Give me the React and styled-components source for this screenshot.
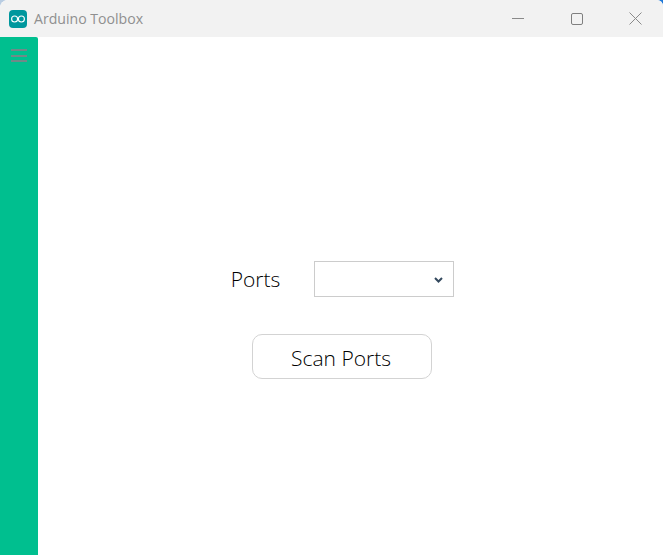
import React from 'react';
import styled, { createGlobalStyle } from 'styled-components';

const Global = createGlobalStyle`
    html, body {
        margin: 0;
        padding: 0;
        background: linear-gradient(90deg, #b9cde2, #1f78d8) no-repeat;
        background-size: 100% 12px;
    }
    * {
        box-sizing: border-box;
    }
`

const Win = styled.div`
    width: 663px;
    height: 555px;
    display: flex;
    flex-direction: column;
    overflow: hidden;
    background: #fff;
    border-radius: 8px 6px 0 0;
    font-family: "Open Sans", sans-serif;
`

const TitleBar = styled.div`
    height: 37px;
    flex: none;
    display: flex;
    align-items: center;
    background: #f2f2f2;
    padding-left: 9px;
`

const AppTitle = styled.span`
    margin-left: 7px;
    font-size: 14.1px;
    color: #8f8f8f;
`

const WinButtons = styled.div`
    margin-left: auto;
    margin-right: -2px;
    display: flex;
    height: 100%;
`

const WinButton = styled.div`
    width: 59px;
    display: flex;
    align-items: center;
    justify-content: center;
`

const Body = styled.div`
    flex: 1;
    display: flex;
`

const Side = styled.div`
    width: 38px;
    flex: none;
    background: #00bf8f;
    border-top-right-radius: 2px;
    padding: 12px 0 0 11px;
`

const Burger = styled.div`
    width: 16px;
    height: 13px;
    display: flex;
    flex-direction: column;
    justify-content: space-between;

    span {
        height: 2px;
        background: #6f8a88;
    }
`

const Main = styled.div`
    flex: 1;
    display: flex;
    flex-direction: column;
    align-items: center;
    padding-top: 224px;
    padding-right: 17px;
`

const Row = styled.div`
    display: flex;
    align-items: center;
    gap: 34px;
    padding-left: 1px;
`

const Label = styled.label`
    font-size: 21px;
    font-weight: 300;
    color: #000;
`

const SelectBox = styled.div`
    position: relative;
    width: 140px;
    height: 36px;
    border: 1px solid #ccc;
    background: #fff;

    svg {
        position: absolute;
        right: 10px;
        top: 15px;
    }
`

const ScanButton = styled.button`
    width: 180px;
    height: 45px;
    margin-top: 37px;
    padding: 3px 2px 0 0;
    background: #fff;
    border: 1px solid #d3d3d3;
    border-radius: 10px;
    font-family: inherit;
    font-size: 21px;
    font-weight: 300;
    color: #000;
`

const Logo = () => (
    <svg width="18" height="18" viewBox="0 0 18 18">
        <rect width="18" height="18" rx="4" fill="#00979d" />
        <circle cx="5.6" cy="9" r="3" fill="none" stroke="#fff" strokeWidth="1.1" />
        <circle cx="12.4" cy="9" r="3" fill="none" stroke="#fff" strokeWidth="1.1" />
    </svg>
)

const App = () => (
    <Win>
        <Global />
        <TitleBar>
            <Logo />
            <AppTitle>Arduino Toolbox</AppTitle>
            <WinButtons>
                <WinButton>
                    <svg width="12" height="12" viewBox="0 0 12 12"><path d="M0 5.5H12" stroke="#8a8a8a" /></svg>
                </WinButton>
                <WinButton>
                    <svg width="12" height="12" viewBox="0 0 12 12"><rect x=".5" y=".5" width="11" height="11" rx="1.5" fill="none" stroke="#7f7f7f" /></svg>
                </WinButton>
                <WinButton>
                    <svg width="13" height="13" viewBox="0 0 13 13"><path d="M.5 .5L12.5 12.5M12.5 .5L.5 12.5" stroke="#8a8a8a" /></svg>
                </WinButton>
            </WinButtons>
        </TitleBar>
        <Body>
            <Side>
                <Burger><span /><span /><span /></Burger>
            </Side>
            <Main>
                <Row>
                    <Label>Ports</Label>
                    <SelectBox>
                        <svg width="9" height="6" viewBox="0 0 9 6"><path d="M1 1L4.5 4.5L8 1" fill="none" stroke="#34495e" strokeWidth="2" /></svg>
                    </SelectBox>
                </Row>
                <ScanButton>Scan Ports</ScanButton>
            </Main>
        </Body>
    </Win>
)

export default App;
